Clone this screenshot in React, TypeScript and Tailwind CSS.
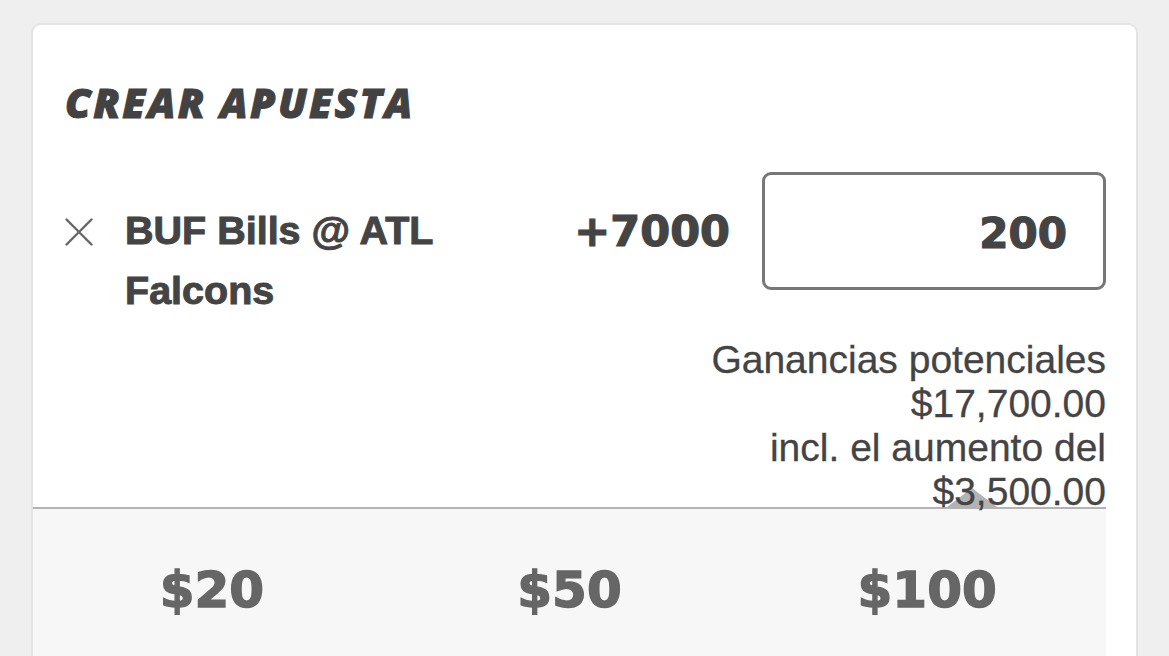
export default function App() {
  const sans = { fontFamily: '"Liberation Sans", Arial, sans-serif' };
  return (
    <div className="min-h-screen bg-[#efefef] pt-[23px] pl-[31px]">
      <div className="w-[1107px] h-[700px] rounded-[10px] border-2 border-[#e4e4e4] bg-white overflow-hidden">
        <div className="pl-[32px] pr-[30px]">
          <h1
            className="pt-[52px] h-[102px] text-[41px] leading-[50px] font-extrabold italic text-[#424242] tracking-[2.4px] font-['Open_Sans',sans-serif] [-webkit-text-stroke:1px_#424242]"
          >
            CREAR APUESTA
          </h1>
          <div className="mt-[45px] flex items-start">
            <svg className="mt-[46px] shrink-0" width="28" height="28" viewBox="0 0 28 28">
              <path d="M1.5 1.5 L26.5 26.5 M26.5 1.5 L1.5 26.5" stroke="#666" strokeWidth="2.4" strokeLinecap="round" fill="none" />
            </svg>
            <div
              className="ml-[32px] w-[420px] mt-[28px] text-[39.5px] leading-[60px] font-bold text-[#444] [-webkit-text-stroke:1px_#444]"
              style={sans}
            >
              BUF Bills @ ATL Falcons
            </div>
            <div className="flex-1 h-[118px] flex items-center justify-end text-[43px] font-bold text-[#444] font-['DejaVu_Sans',sans-serif] [-webkit-text-stroke:1.2px_#444]">
              +7000
            </div>
            <div className="ml-[32px] w-[344px] h-[118px] shrink-0 rounded-[9px] border-[3px] border-[#777] flex items-center justify-end pr-[36px] pt-[4px] text-[42px] font-bold text-[#444] font-['DejaVu_Sans',sans-serif] [-webkit-text-stroke:1.2px_#444]">
              200
            </div>
          </div>
          <div
            className="relative z-10 mt-[18px] mb-[-7px] text-right text-[39px] leading-[44px] text-[#444] [-webkit-text-stroke:0.3px_#444]"
            style={sans}
          >
            <div>Ganancias potenciales</div>
            <div>$17,700.00</div>
            <div>incl. el aumento del</div>
            <div>$3,500.00</div>
          </div>
        </div>
        <div className="relative mr-[30px] h-[220px] border-t-2 border-[#b3b3b3] bg-[#f7f7f7] pt-[51px] grid grid-cols-3 text-center text-[50px] leading-[60px] font-bold text-[#666] font-['DejaVu_Sans',sans-serif] [-webkit-text-stroke:1.4px_#666]">
          <svg className="absolute left-[914px] top-[-22px]" width="50" height="20" viewBox="0 0 50 20">
            <polygon points="0,20 25,1 50,20" fill="#b3b3b3" />
          </svg>
          <div>$20</div>
          <div>$50</div>
          <div>$100</div>
        </div>
      </div>
    </div>
  );
}
